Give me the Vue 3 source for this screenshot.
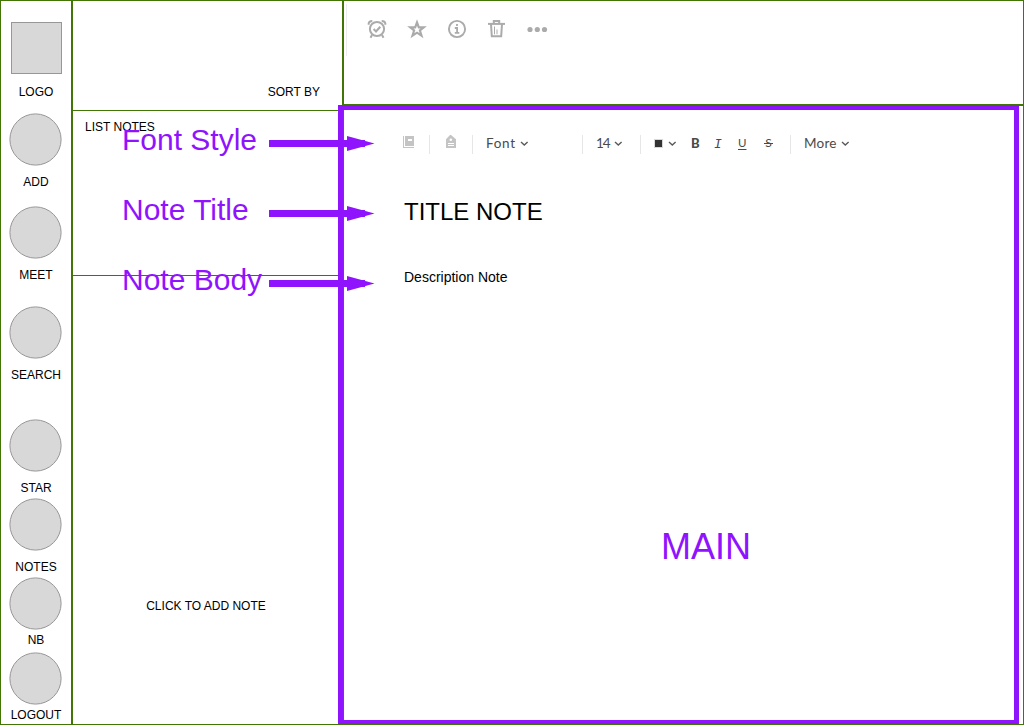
<script setup>
const items = [
  { label: 'ADD', kind: 'add' },
  { label: 'MEET', kind: 'meet' },
  { label: 'SEARCH', kind: 'search' },
  { label: 'STAR', kind: 'star' },
  { label: 'NOTES', kind: 'notes' },
  { label: 'NB', kind: 'nb' },
  { label: 'LOGOUT', kind: 'logout' },
]
const callouts = ['Font Style', 'Note Title', 'Note Body']
</script>

<template>
  <div class="page">
    <nav class="sidebar">
      <div class="item item-logo">
        <div class="logo"></div>
        <span>LOGO</span>
      </div>
      <div v-for="i in items" :key="i.kind" class="item" :class="'item-' + i.kind">
        <svg width="53" height="53" viewBox="0 0 53 53">
          <circle cx="26.5" cy="26.5" r="25.6" fill="#d8d8d8" stroke="#979797" />
        </svg>
        <span>{{ i.label }}</span>
      </div>
    </nav>

    <section class="list">
      <header class="sort">SORT BY</header>
      <div class="notes">LIST NOTES</div>
      <div class="click">CLICK TO ADD NOTE</div>
    </section>

    <section class="content">
      <header class="actions">
        <div class="rule"></div>
        <svg class="alarm" width="20" height="20" viewBox="0 0 20 20" fill="none" stroke="#ababab">
          <circle cx="10" cy="10" r="7.1" stroke-width="2" />
          <path d="M6.6 10.1l2.4 2.3 4.3-4.6" stroke-width="2.1" />
          <path d="M1.7 5.8V4.3Q2.2 2 5.3 2M18.3 5.8V4.3Q17.8 2 14.7 2" stroke-width="2" />
          <path d="M5 16l-1.5 2.8M15 16l1.5 2.8" stroke-width="2" />
        </svg>
        <svg width="20" height="20" viewBox="0 0 20 20" fill="none" stroke="#ababab" stroke-width="2.2">
          <path d="M10 3.4l1.8 4.9h5l-3.9 3.2 1.6 5.2-4.5-3-4.5 3 1.6-5.2-3.9-3.2h5z" />
        </svg>
        <svg width="20" height="20" viewBox="0 0 20 20" fill="none" stroke="#ababab">
          <circle cx="10" cy="10" r="8.1" stroke-width="1.9" />
          <path d="M10 5v2M7.8 9h2.3v4.4M7.8 13.8h4.5" stroke-width="1.8" />
        </svg>
        <svg width="20" height="20" viewBox="0 0 20 20" fill="none" stroke="#ababab">
          <path d="M1 4.9h17" stroke-width="2" />
          <path d="M6.8 4.5V2h5.4v2.5M4 5l.8 12.2h9.4L15 5" stroke-width="2" />
          <path d="M7.5 7.5v7.8M10 10.5v4.8" stroke-width="1" />
        </svg>
        <svg width="22" height="20" viewBox="0 0 22 20" fill="#ababab">
          <circle cx="3" cy="10.5" r="2.6" /><circle cx="10.3" cy="10.5" r="2.6" /><circle cx="17.5" cy="10.5" r="2.6" />
        </svg>
      </header>

      <main class="editor">
        <div class="toolbar">
          <div class="seg seg-book">
            <svg width="12" height="14" viewBox="0 0 12 14">
              <path fill="#c4c4c4" d="M0 1h1v12H0zM2 1h9v10H2zM1 12h10v1H1z" />
              <path fill="#fff" d="M5 4h4v2H5z" />
            </svg>
          </div>
          <div class="seg seg-tag">
            <svg width="12" height="14" viewBox="0 0 12 14">
              <path fill="#c4c4c4" d="M5 0h1l5 4.2V13H1V4.2z" />
              <circle cx="5.8" cy="4.8" r="1.3" fill="#fff" />
              <path fill="#fff" d="M3 8h6v1H3zM3 10h6v1H3z" />
            </svg>
          </div>
          <div class="seg seg-font">
            <span class="t-font">Font</span>
            <svg class="chev" width="9" height="6" viewBox="0 0 9 6"><path d="M1 1l3.3 3 3.3-3" /></svg>
          </div>
          <div class="seg seg-size">
            <span class="t-size">14</span>
            <svg class="chev" width="9" height="6" viewBox="0 0 9 6"><path d="M1 1l3.3 3 3.3-3" /></svg>
          </div>
          <div class="seg seg-style">
            <i class="swatch"></i>
            <svg class="chev" width="9" height="6" viewBox="0 0 9 6"><path d="M1 1l3.3 3 3.3-3" /></svg>
            <b class="bold">B</b>
            <em class="ital">I</em>
            <span class="under">U</span>
            <span class="strike">S</span>
          </div>
          <div class="seg seg-more">
            <span class="t-more">More</span>
            <svg class="chev" width="9" height="6" viewBox="0 0 9 6"><path d="M1 1l3.3 3 3.3-3" /></svg>
          </div>
        </div>
        <h1>TITLE NOTE</h1>
        <p>Description Note</p>
        <div class="main-label">MAIN</div>
      </main>
    </section>

    <div class="frame"></div>
    <div class="callouts">
      <div v-for="c in callouts" :key="c" class="callout">
        <span>{{ c }}</span>
        <svg width="106" height="16" viewBox="0 0 106 16" fill="#9013fe">
          <path d="M0 4h78V0l27.5 7.5L78 15v-4H0z" />
          <path d="M78 4h18v7H78z" />
        </svg>
      </div>
    </div>
  </div>
</template>

<style>
body {
  margin: 0;
  background: #fff;
}
</style>

<style scoped>
.page {
  position: relative;
  box-sizing: border-box;
  width: 1024px;
  height: 725px;
  overflow: hidden;
  display: grid;
  grid-template-columns: 70px 271px 1fr;
  border: 1px solid #417505;
  font: 12px/14px "Liberation Sans", Arial, sans-serif;
  color: #000;
}
svg {
  display: block;
  flex: none;
}
.sidebar {
  display: flex;
  flex-direction: column;
}
.item {
  display: flex;
  flex: none;
  flex-direction: column;
  align-items: center;
  justify-content: space-between;
  height: 76px;
}
.item svg {
  margin-right: 1px;
}
.item-logo {
  margin-top: 21px;
  height: 77px;
}
.logo {
  box-sizing: border-box;
  width: 51px;
  height: 52px;
  margin-left: 1px;
  background: #d8d8d8;
  border: 1px solid #979797;
}
.item-add { margin-top: 14px; }
.item-meet { margin-top: 17px; }
.item-search { margin-top: 24px; }
.item-star { margin-top: 37px; }
.item-notes { margin-top: 3px; }
.item-nb { margin-top: 3px; height: 70px; }
.item-logout { margin-top: 5px; height: 70px; }
.list {
  border-left: 2px solid #417505;
  display: flex;
  flex-direction: column;
}
.sort {
  box-sizing: border-box;
  height: 110px;
  padding: 84px 22px 0 0;
  text-align: right;
  border-bottom: 1px solid #417505;
}
.notes {
  box-sizing: border-box;
  height: 165px;
  padding: 9px 12px;
  border-bottom: 1px solid #417505;
}
.click {
  padding: 323px 3px 0 0;
  text-align: center;
}
.content {
  border-left: 2px solid #417505;
  display: flex;
  flex-direction: column;
}
.actions {
  box-sizing: border-box;
  height: 105px;
  border-bottom: 2px solid #417505;
  display: flex;
  align-items: flex-start;
  gap: 20px;
  padding: 18px 0 0 2px;
}
.rule {
  width: 1px;
  height: 52px;
  margin-top: -15px;
  background: #ececec;
}
.editor {
  flex: 1;
  padding: 24px 0 0 46px;
}
.toolbar {
  display: flex;
  height: 28px;
  font-family: Lato, sans-serif;
  font-size: 13.5px;
  color: #4a4a4a;
}
.seg {
  box-sizing: border-box;
  display: flex;
  align-items: center;
  height: 19px;
  margin-top: 5px;
  border-right: 1px solid #e6e6e6;
}
.seg-book { width: 40px; padding-left: 13px; }
.seg-tag { width: 43px; padding-left: 15px; }
.seg-font { width: 110px; padding-left: 13px; }
.seg-size { width: 58px; padding-left: 13px; }
.seg-style { width: 150px; padding-left: 13px; }
.seg-more { width: 65px; padding-left: 13px; border: 0; }
.seg-book svg, .seg-tag svg { margin-top: -5px; }
.chev {
  margin-top: -1px;
  fill: none;
  stroke: #5a5a5a;
  stroke-width: 1.4;
}
.t-font { width: 34px; letter-spacing: .7px; }
.t-size { width: 18px; letter-spacing: -1px; }
.t-more { width: 37px; letter-spacing: .2px; }
.t-font, .t-size, .t-more, .bold, .under, .strike {
  flex: none;
  line-height: 16px;
  margin-top: -3px;
}
.swatch {
  width: 7px;
  height: 7px;
  margin: -2px 5px 0 0;
  background: #333;
  border: 1px solid #d8d8d8;
}
.bold {
  width: 9px;
  margin-left: 14px;
  font-size: 13px;
  font-weight: 900;
}
.ital {
  flex: none;
  width: 6px;
  margin: 1px 0 0 14px;
  font: italic 13px/16px "Liberation Mono", monospace;
}
.under {
  width: 8px;
  margin-left: 18px;
  font-size: 11.5px;
  text-align: center;
  text-decoration: underline;
  text-underline-offset: 2px;
}
.strike {
  width: 9px;
  margin-left: 18px;
  font-size: 12px;
  text-align: center;
  position: relative;
}
.strike::after {
  content: "";
  position: absolute;
  left: 0;
  top: 8px;
  width: 9px;
  height: 1px;
  background: #4a4a4a;
}
h1 {
  margin: 40px 0 0 14px;
  font-size: 24px;
  line-height: 28px;
  font-weight: 400;
}
p {
  margin: 43px 0 0 14px;
  font-size: 14px;
  line-height: 16px;
}
.main-label {
  margin: 242px 0 0 271px;
  font-size: 36px;
  line-height: 40px;
  color: #9013fe;
}
/* Highlight frame laid over the editor area */
.frame {
  position: absolute;
  box-sizing: border-box;
  left: 337px;
  top: 104px;
  width: 681px;
  height: 620px;
  border: 5px solid #9013fe;
}
.callouts {
  position: absolute;
  left: 121px;
  top: 121px;
  color: #9013fe;
}
.callout {
  display: flex;
  align-items: flex-start;
  height: 70px;
  font-size: 30px;
  line-height: 36px;
  white-space: nowrap;
}
.callout span {
  width: 147px;
}
.callout svg {
  margin-top: 14px;
}
</style>
